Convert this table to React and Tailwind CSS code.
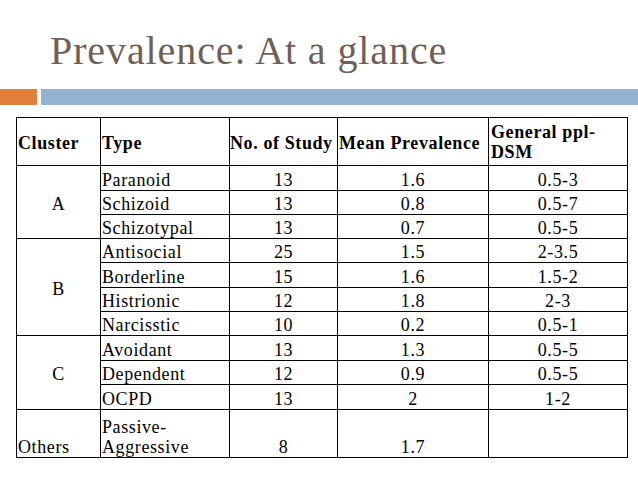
import React from "react";

const rows = [
  { type: "Paranoid", n: "13", mean: "1.6", gen: "0.5-3", h: "h-[25px]" },
  { type: "Schizoid", n: "13", mean: "0.8", gen: "0.5-7", h: "h-[24px]" },
  { type: "Schizotypal", n: "13", mean: "0.7", gen: "0.5-5", h: "h-[24px]" },
  { type: "Antisocial", n: "25", mean: "1.5", gen: "2-3.5", h: "h-[24px]" },
  { type: "Borderline", n: "15", mean: "1.6", gen: "1.5-2", h: "h-[25px]" },
  { type: "Histrionic", n: "12", mean: "1.8", gen: "2-3", h: "h-[24px]" },
  { type: "Narcisstic", n: "10", mean: "0.2", gen: "0.5-1", h: "h-[24px]" },
  { type: "Avoidant", n: "13", mean: "1.3", gen: "0.5-5", h: "h-[25px]" },
  { type: "Dependent", n: "12", mean: "0.9", gen: "0.5-5", h: "h-[24px]" },
  { type: "OCPD", n: "13", mean: "2", gen: "1-2", h: "h-[25px]" },
];

const clusters = { 0: ["A", 3], 3: ["B", 4], 7: ["C", 3] };

const cell = "border border-black p-0 leading-[18px]";

export default function App() {
  return (
    <div
      className="w-[638px] h-[479px] bg-white overflow-hidden text-black"
      style={{ fontFamily: '"Liberation Serif", serif' }}
    >
      <div className="h-[89px] pt-[31px] pl-[50px]">
        <h1 className="text-[40px] leading-[40px] tracking-[0.9px] text-[#6f5f58] font-normal">
          Prevalence: At a glance
        </h1>
      </div>
      <div className="flex h-[16px] gap-[4px]">
        <div className="w-[37px] bg-[#e0803f]" />
        <div className="flex-1 bg-[#93b3d0]" />
      </div>
      <div className="pl-[16px] pt-[12px]">
        <table className="table-fixed border-collapse w-[612px] text-[18px] tracking-[0.6px]">
          <colgroup>
            <col className="w-[84px]" />
            <col className="w-[129px]" />
            <col className="w-[108px]" />
            <col className="w-[151px]" />
            <col className="w-[139px]" />
          </colgroup>
          <tbody>
            <tr className="h-[48px] font-bold">
              <td className={`${cell} align-middle pt-[3px] pl-[1px]`}>Cluster</td>
              <td className={`${cell} align-middle pt-[3px] pl-[1px]`}>Type</td>
              <td className={`${cell} align-middle pt-[3px] whitespace-nowrap`}>No. of Study</td>
              <td className={`${cell} align-middle pt-[3px] pl-[1px] whitespace-nowrap`}>Mean Prevalence</td>
              <td className={`${cell} align-bottom pb-[3px] pl-[2px] !leading-[20px]`}>
                General ppl-
                <br />
                DSM
              </td>
            </tr>
            {rows.map((r, i) => (
              <tr key={r.type} className={r.h}>
                {clusters[i] && (
                  <td
                    rowSpan={clusters[i][1]}
                    className={`${cell} align-middle text-center pt-[3px]`}
                  >
                    {clusters[i][0]}
                  </td>
                )}
                <td className={`${cell} align-bottom pb-[1px] pl-[1px]`}>{r.type}</td>
                <td className={`${cell} align-bottom pb-[1px] text-center`}>{r.n}</td>
                <td className={`${cell} align-bottom pb-[1px] text-center`}>{r.mean}</td>
                <td className={`${cell} align-bottom pb-[1px] text-center`}>{r.gen}</td>
              </tr>
            ))}
            <tr className="h-[48px]">
              <td className={`${cell} align-bottom pl-[1px] !leading-[20px]`}>Others</td>
              <td className={`${cell} align-bottom pl-[1px] !leading-[20px]`}>
                Passive-
                <br />
                Aggressive
              </td>
              <td className={`${cell} align-bottom text-center !leading-[20px]`}>8</td>
              <td className={`${cell} align-bottom text-center !leading-[20px]`}>1.7</td>
              <td className={`${cell}`}></td>
            </tr>
          </tbody>
        </table>
      </div>
    </div>
  );
}
